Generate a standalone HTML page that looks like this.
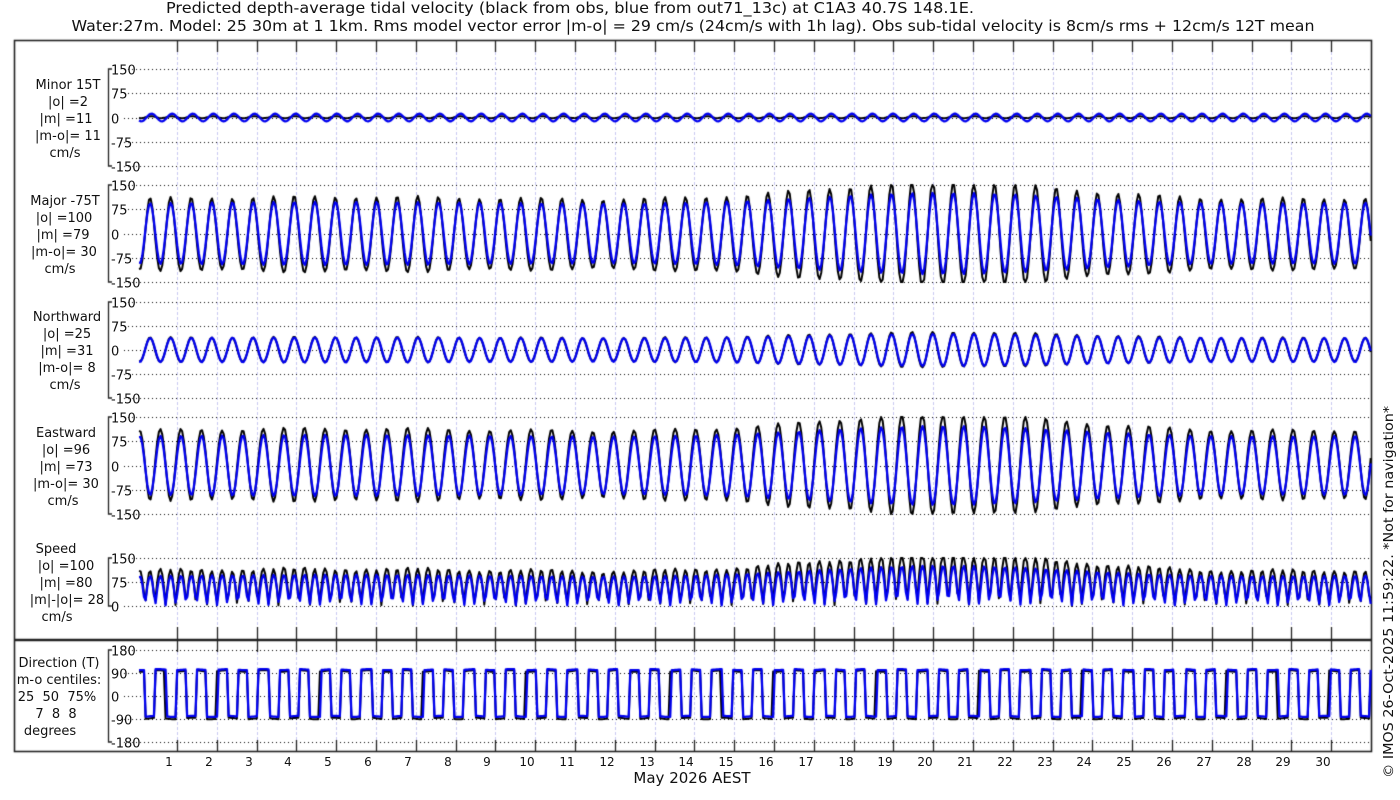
<!DOCTYPE html>
<html><head><meta charset="utf-8">
<style>
html,body{margin:0;padding:0;background:#fff;width:1400px;height:800px;overflow:hidden}
#c{position:absolute;left:0;top:0}
svg{position:absolute;left:0;top:0}
text{font-family:"DejaVu Sans","Liberation Sans",sans-serif;fill:#111}
</style></head>
<body>
<canvas id="c" width="1400" height="800"></canvas>
<svg width="1400" height="800" xmlns="http://www.w3.org/2000/svg">
<text x="570" y="13" font-size="15" text-anchor="middle" textLength="808" lengthAdjust="spacingAndGlyphs">Predicted depth-average tidal velocity (black from obs, blue from out71_13c) at C1A3 40.7S 148.1E.</text>
<text x="693" y="31" font-size="15" text-anchor="middle" textLength="1243" lengthAdjust="spacingAndGlyphs">Water:27m. Model: 25 30m at 1 1km. Rms model vector error |m-o| = 29 cm/s (24cm/s with 1h lag). Obs sub-tidal velocity is 8cm/s rms + 12cm/s 12T mean</text>
<g font-size="13" text-anchor="middle">
<text x="68" y="89">Minor 15T</text><text x="68" y="106">|o| =2</text><text x="66" y="123">|m| =11</text><text x="68" y="140">|m-o|= 11</text><text x="65" y="157">cm/s</text>
<text x="65" y="205">Major -75T</text><text x="64" y="222">|o| =100</text><text x="63" y="239">|m| =79</text><text x="64" y="256">|m-o|= 30</text><text x="60" y="273">cm/s</text>
<text x="67" y="321">Northward</text><text x="67" y="338">|o| =25</text><text x="67" y="355">|m| =31</text><text x="67" y="372">|m-o|= 8</text><text x="65" y="389">cm/s</text>
<text x="66" y="437">Eastward</text><text x="66" y="454">|o| =96</text><text x="66" y="471">|m| =73</text><text x="66" y="488">|m-o|= 30</text><text x="63" y="505">cm/s</text>
<text x="56" y="553">Speed</text><text x="66" y="570">|o| =100</text><text x="66" y="587">|m| =80</text><text x="67" y="604">|m|-|o|= 28</text><text x="57" y="621">cm/s</text>
<text x="59" y="667">Direction (T)</text><text x="59" y="684">m-o centiles:</text><text x="57" y="701">25&#160; 50&#160; 75%</text><text x="56" y="718">7&#160; 8&#160; 8</text><text x="50" y="735">degrees</text>
</g>
<g id="yl" font-size="13"></g>
<g id="dl" font-size="12" text-anchor="middle"></g>
<text x="692" y="783" font-size="15" text-anchor="middle">May 2026 AEST</text>
<text transform="translate(1393,592) rotate(-90)" font-size="13" text-anchor="middle" textLength="372" lengthAdjust="spacingAndGlyphs">© IMOS 26-Oct-2025 11:59:22. *Not for navigation*</text>
</svg>
<script>
var cv=document.getElementById('c'),g=cv.getContext('2d');
var X0=139,X1=1371,PPD=39.8;
var panels=[
 {top:69,bot:166,lo:-150,hi:150,ticks:[150,75,0,-75,-150]},
 {top:185,bot:282,lo:-150,hi:150,ticks:[150,75,0,-75,-150]},
 {top:302,bot:398,lo:-150,hi:150,ticks:[150,75,0,-75,-150]},
 {top:417,bot:514,lo:-150,hi:150,ticks:[150,75,0,-75,-150]},
 {top:558,bot:606,lo:0,hi:150,ticks:[150,75,0]},
 {top:650,bot:742,lo:-180,hi:180,ticks:[180,90,0,-90,-180]}];
function Y(p,v){return p.top+(p.hi-v)/(p.hi-p.lo)*(p.bot-p.top);}
g.strokeStyle='#c8c8f0';g.lineWidth=1;g.setLineDash([3,2]);
var dl='';
for(var d=1;d<=30;d++){var x=Math.round(177+(d-1)*PPD)+0.5;
 g.beginPath();g.moveTo(x,52);g.lineTo(x,740);g.stroke();
 dl+='<text x="'+(x-8.5)+'" y="766">'+d+'</text>';}
document.getElementById('dl').innerHTML=dl;
g.strokeStyle='#000';g.setLineDash([1,3]);
var yl='';
panels.forEach(function(p){p.ticks.forEach(function(v){var y=Math.round(Y(p,v))+0.5;
 g.beginPath();g.moveTo(124,y);g.lineTo(X1,y);g.stroke();
 yl+='<text x="111" y="'+(y+5)+'">'+v+'</text>';});});
document.getElementById('yl').innerHTML=yl;
g.setLineDash([]);
g.strokeStyle='#222';g.lineWidth=1.3;
panels.forEach(function(p){g.beginPath();g.moveTo(112,p.top);g.lineTo(108.5,p.top);g.lineTo(108.5,p.bot);g.lineTo(112,p.bot);g.stroke();});
g.lineWidth=1.6;g.strokeRect(14.5,40.5,X1-14,711);
g.lineWidth=2.4;g.beginPath();g.moveTo(14,640);g.lineTo(X1,640);g.stroke();
g.lineWidth=1.3;
for(var d=1;d<=30;d++){var x=Math.round(177+(d-1)*PPD)+0.5;
 [[41,52],[627,652],[740,751]].forEach(function(s){g.beginPath();g.moveTo(x,s[0]);g.lineTo(x,s[1]);g.stroke();});}
var P=0.5175,TW=2*Math.PI;
function env(t){return Math.exp(-Math.pow((t-20.3)/4.3,2));}
function series(t,obs){
 var ph=TW*(t-0.276)/P;
 var A,M,m;
 if(obs){A=112+45*env(t)+4*Math.cos(TW*(t-5)/14.77)+4*Math.sin(TW*t/3.1);M=A*Math.cos(ph)-6+4*Math.cos(2*ph);m=3*Math.cos(ph-0.3)+1;}
 else{A=95+28*env(t)+3*Math.cos(TW*(t-5)/14.77);M=A*Math.cos(ph-0.05);m=12*Math.cos(ph-0.5);}
 var N=(obs?0.34:0.4)*M+(obs?2:0), E=-0.97*M;
 var sp=Math.sqrt(M*M+(obs?m*m:m*m*0.1));
 var dir;
 var mm=obs?M+6:M;
 if(mm<0)dir=obs?98:103; else dir=obs?-88:-80;
 dir+= (obs?3:2)*Math.sin(ph*0.5+t);
 return [m,M,N,E,sp,dir];}
function draw(obs,col,lw){
 g.strokeStyle=col;g.lineWidth=lw;g.lineJoin='round';
 for(var k=0;k<6;k++){var p=panels[k];g.beginPath();var first=true;
  for(var x=X0;x<=X1+0.01;x+=1.66){var t=(x-X0)/PPD;var v=series(t,obs)[k];
   if(v>p.hi)v=p.hi;if(v<p.lo)v=p.lo;var y=Y(p,v);
   if(first){g.moveTo(x,y);first=false;}else g.lineTo(x,y);}
  g.stroke();}}
g.save();g.beginPath();g.rect(X0-1,40,X1-X0+2,712);g.clip();
draw(true,'#000',2);draw(false,'#0000ee',2.3);
g.restore();
</script>
</body></html>
